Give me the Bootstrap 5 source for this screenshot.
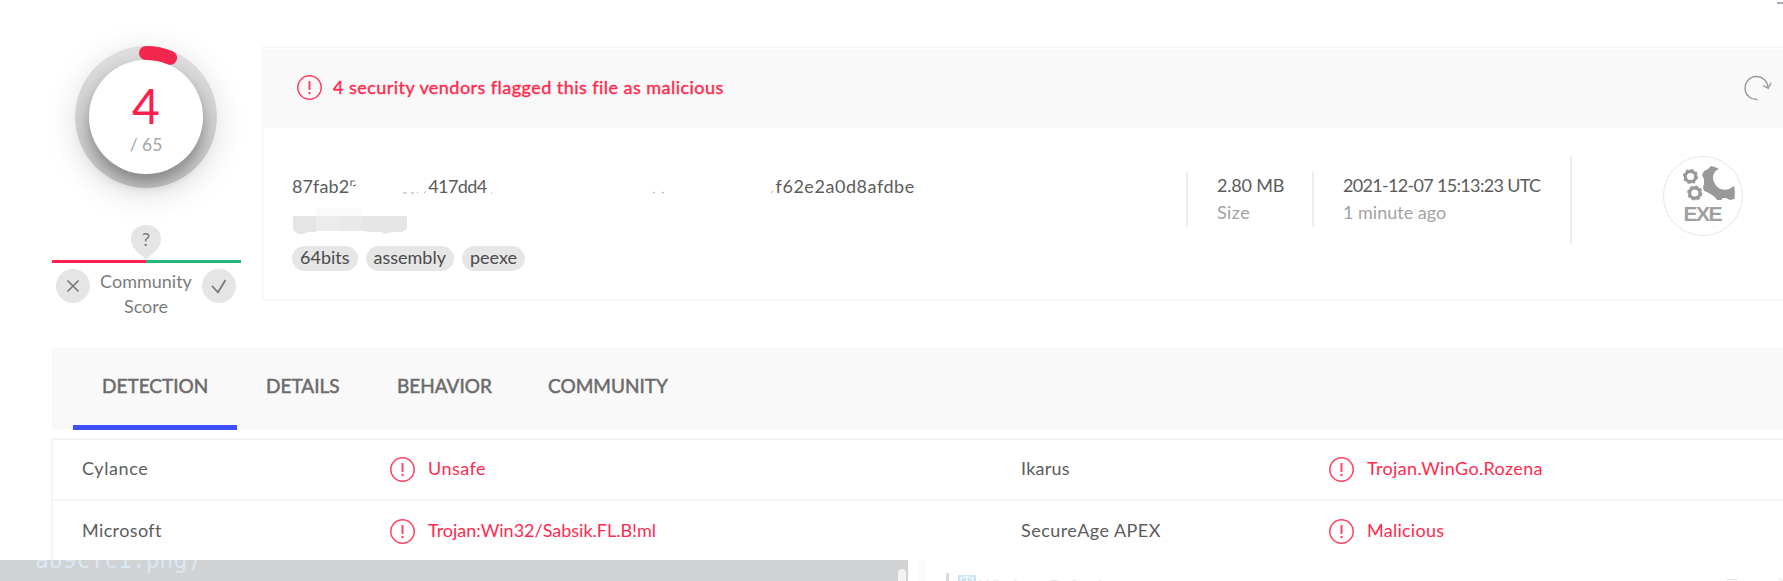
<!DOCTYPE html>
<html lang="en">
<head>
<meta charset="utf-8">
<title>File report</title>
<link href="https://cdn.jsdelivr.net/npm/bootstrap@5.3.0/dist/css/bootstrap.min.css" rel="stylesheet">
<style>
body{font:18px/25px Lato,"Liberation Sans",sans-serif;color:#5c5c5c;width:1783px;height:581px;overflow:hidden;position:relative;background:#fff}
svg{display:block;flex:none}
.red{color:#ff2b4f}
.soft{color:#a3a3a3}
.edge{position:absolute;right:0;top:2px;width:6px;height:2px;background:#a9adb8}
.summary{padding:46px 0 0 51px;height:348px}
.score{width:190px;margin-right:21px}
.ring{width:142px;height:142px;border-radius:50%;background:linear-gradient(#dedede,#c4c4c4);box-shadow:0 6px 32px rgba(0,0,0,.13);position:relative;margin:0 0 37px}
.disc{width:114px;height:114px;background:#fff;border-radius:50%;box-shadow:0 8px 15px rgba(0,0,0,.34)}
.arc{position:absolute;left:0;top:0}
.num{font-size:48px;line-height:48px;color:#ff1f4f;padding-top:3px}
.of{font-size:17.5px;line-height:22px;color:#a6a6a6;margin-top:4px}
.split{height:3px;width:189px;margin-top:1px}
.split div:first-child{background:#ff2056}
.split div:last-child{background:#25b777}
.votes{padding:6px 5px 0 5px;width:190px;color:#7c7c7c}
.report{border:2px solid #f8f8f8;border-right:0;width:1521px;height:255px}
.alertbar{background:#f9f9f9;height:79px;margin-top:1px;padding:0 11px 2px 33px}
.headline{-webkit-text-stroke:.4px;letter-spacing:.46px;margin-left:11px;margin-top:-1px}
.facts{height:171px}
.file{width:922px;padding:46px 0 0 28px;flex:none}
.sum{height:25px}
.pill{background:#e6e6e6;color:#4c4c4c;height:25px;line-height:23px;border-radius:13px;padding:0 8px}
.fact{border-left:2px solid #ededed;height:55px;line-height:27px}
.tabs{margin-left:52px;height:82px;background:#f9f9f9;color:#6b6b6b;padding-left:21px}
.tabs a{color:inherit;text-decoration:none;font-size:19px;-webkit-text-stroke:.5px;line-height:25px;padding-top:25px;height:82px}
.tabs .on{width:164px;padding-left:29px;border-bottom:5px solid #3d50fb}
.results{margin:8px 0 0 51px;border:2px solid #f5f5f5;border-right:0;height:130px}
.line{height:61px;padding-bottom:1px;border-bottom:2px solid #f5f5f5}
.line span{margin-top:-2px}
.vendor{padding-left:29px;width:337px}
.cellpair{width:939px;flex:none}
.cellpair:last-child{width:790px}
.cellpair svg{margin-right:13px}
.behind{position:absolute;left:0;top:560px;width:908px;height:21px;background:#d1d2d4;overflow:hidden}
.behind div{font:23px/27px "DejaVu Sans Mono",monospace;color:#dbe8f5;margin:-13px 0 0 35px}
.thumb{position:absolute;left:898px;top:569px;width:8px;height:12px;border-radius:4px 4px 0 0;background:#f3f3f3}
.ghost{position:absolute;left:908px;top:560px;right:0;height:21px;overflow:hidden;background:#fff}
</style>
</head>
<body>
<svg width="0" height="0" class="position-absolute"><defs>
<symbol id="warn" viewBox="0 0 25 25"><circle cx="12.5" cy="12.5" r="11.7" fill="none" stroke="#ff3f61" stroke-width="1.5"/><path d="M12.5 6v9" stroke="#ff3f61" stroke-width="1.9"/><path d="M12.5 17v2.2" stroke="#ff3f61" stroke-width="1.9"/></symbol>
</defs></svg>
<div class="edge"></div>

<section class="summary d-flex">
  <div class="score d-flex flex-column align-items-center">
    <div class="ring d-flex align-items-center justify-content-center">
      <div class="disc text-center d-flex flex-column justify-content-center"><div class="num">4</div><div class="of">/ 65</div></div>
      <svg class="arc" width="142" height="142"><path d="M71 7A64 64 0 0 1 95.1 11.7" fill="none" stroke="#f3264d" stroke-width="14" stroke-linecap="round"/></svg>
    </div>
    <svg width="30" height="34" viewBox="0 0 30 34"><path d="M15 0C24 0 30 6 30 14C30 23 22 29 15 34C8 29 0 23 0 14C0 6 6 0 15 0Z" fill="#e5e5e5"/><text x="15" y="21" text-anchor="middle" font-size="18" fill="#777">?</text></svg>
    <div class="split d-flex"><div class="w-50"></div><div class="w-50"></div></div>
    <div class="votes d-flex justify-content-between align-items-start">
      <svg width="34" height="34" viewBox="0 0 34 34"><circle cx="17" cy="17" r="17" fill="#e5e5e5"/><path d="M11.5 11.5l11 11m0-11l-11 11" stroke="#777" stroke-width="1.6"/></svg>
      <div class="text-center">Community<br>Score</div>
      <svg width="34" height="34" viewBox="0 0 34 34"><circle cx="17" cy="17" r="17" fill="#e5e5e5"/><path d="M10 17l6 6.3L23.500 11" fill="none" stroke="#777" stroke-width="1.7"/></svg>
    </div>
  </div>

  <div class="report">
    <div class="alertbar d-flex align-items-center">
      <svg width="25" height="25"><use href="#warn"/></svg>
      <span class="headline red">4 security vendors flagged this file as malicious</span>
      <svg class="ms-auto" width="28" height="26" viewBox="0 0 28 26"><path d="M13.500 24.500A11.5 11.5 0 1 1 24 12.500" fill="none" stroke="#999" stroke-width="1.4"/><path d="M19 10.500l5.200 2.700L27 7.800" fill="none" stroke="#999" stroke-width="1.4"/></svg>
    </div>
    <div class="facts d-flex">
      <div class="file">
        <div class="sum d-flex">
          <span style="letter-spacing:.1px">87fab2</span>
          <svg width="79" height="25" viewBox="0 0 79 25"><path d="M6 7H2V12M4 12L7 11" fill="none" stroke="#666" stroke-width="1.2"/><path d="M54 19h4M62 19h3M68 19l1-1M75 19l2-2" stroke="#aaa" stroke-width="1"/></svg>
          <span style="letter-spacing:-.6px">417dd4</span>
          <svg width="289" height="25" viewBox="0 0 289 25"><path d="M4 19h1M166 19l2-1M175 19l2-1M284 19l2-2" stroke="#aaa" stroke-width="1"/></svg>
          <span style="letter-spacing:.55px">f62e2a0d8afdbe</span>
        </div>
        <svg class="mt-2" width="119" height="28" viewBox="1 0 119 28"><path d="M2 9H25V25L17 25L12 27H7L2 23Z" fill="#e4e5e6"/><path d="M25 9H71V24H25Z" fill="#ececec"/><path d="M48 9H71V24H48Z" fill="#e9e9e9"/><path d="M71 9H116V22L111 25H102L94 27L90 25L80 25L71 24Z" fill="#e6e6e6"/><path d="M25 1H70V9H25Z" fill="#fafafa"/></svg>
        <div class="d-flex gap-2 mt-2" style="padding-top:3px">
          <span class="pill">64bits</span><span class="pill">assembly</span><span class="pill">peexe</span>
        </div>
      </div>
      <div class="fact" style="width:126px;margin-top:44px;padding-left:29px"><span style="letter-spacing:-.2px">2.80 MB</span><br><span class="soft" style="letter-spacing:.4px">Size</span></div>
      <div class="fact" style="width:258px;margin-top:44px;padding-left:29px"><span style="letter-spacing:-.68px">2021-12-07 15:13:23 UTC</span><br><span class="soft">1 minute ago</span></div>
      <div class="fact" style="height:88px;margin-top:28px;padding-left:90px">
        <svg width="82" height="82" viewBox="0 1 82 82"><circle cx="41" cy="41" r="39.500" fill="#fff" stroke="#e6e6e6"/>
        <g fill="none" stroke="#999"><circle cx="28.500" cy="21.500" r="5.200" stroke-width="3.200"/><circle cx="28.500" cy="21.500" r="6.800" stroke-width="1.600" stroke-dasharray="3 2.340"/><circle cx="32.800" cy="38" r="5.200" stroke-width="3.200"/><circle cx="32.800" cy="38" r="6.800" stroke-width="1.600" stroke-dasharray="3 2.340"/></g>
        <path d="M57 14C51 16 50 23 52 27C55 34 61 36 67 34L72 31C73 35 73 39 72.500 44L68 45L64 43L61 43L59 45L55 45L53 42L50 40L45 37L42 36L41 32L42 29V24L40 20L42 16L46 14L49 11L53 12Z" fill="#999"/>
        <text x="41" y="65.500" text-anchor="middle" textLength="39" font-family="Liberation Sans, sans-serif" font-weight="700" font-size="21" fill="#9f9f9f">EXE</text></svg>
      </div>
    </div>
  </div>
</section>

<nav class="tabs d-flex">
  <a href="#" class="on">DETECTION</a>
  <a href="#" style="margin-left:29px;width:131px">DETAILS</a>
  <a href="#" style="width:151px">BEHAVIOR</a>
  <a href="#">COMMUNITY</a>
</nav>

<section class="results">
  <div class="line d-flex align-items-center">
    <div class="cellpair d-flex align-items-center"><span class="vendor" style="letter-spacing:.6px">Cylance</span><svg width="25" height="25"><use href="#warn"/></svg><span class="red" style="letter-spacing:.45px">Unsafe</span></div>
    <div class="cellpair d-flex align-items-center"><span class="vendor" style="letter-spacing:.24px">Ikarus</span><svg width="25" height="25"><use href="#warn"/></svg><span class="red" style="letter-spacing:.36px">Trojan.WinGo.Rozena</span></div>
  </div>
  <div class="line d-flex align-items-center border-0">
    <div class="cellpair d-flex align-items-center"><span class="vendor" style="letter-spacing:.37px">Microsoft</span><svg width="25" height="25"><use href="#warn"/></svg><span class="red">Trojan:Win32/Sabsik.FL.B!ml</span></div>
    <div class="cellpair d-flex align-items-center"><span class="vendor" style="letter-spacing:.46px">SecureAge APEX</span><svg width="25" height="25"><use href="#warn"/></svg><span class="red" style="letter-spacing:.26px">Malicious</span></div>
  </div>
</section>

<div class="behind"><div>ab9cfc1.png)</div></div>
<div class="thumb"></div>
<div class="ghost"><svg width="875" height="21"><path d="M10 0h8v21h-8z" fill="#fcfcfc"/><path d="M38 13h3v8h-3z" fill="#d8dbde"/><path d="M50 15h18v6H50z" fill="#cde4f7"/><path d="M53 21v-3l6-1.500 6 1.500v3M59 16v5" fill="none" stroke="#fff" stroke-width="1.200"/><text x="71" y="31" font-size="16" fill="#e6e6e6">Windows Defender</text><path d="M819.500 21v-1.500h9V21M872 19l3 2" fill="none" stroke="#e2e2e2"/></svg></div>
<script src="https://cdn.jsdelivr.net/npm/bootstrap@5.3.0/dist/js/bootstrap.bundle.min.js"></script>
</body>
</html>
